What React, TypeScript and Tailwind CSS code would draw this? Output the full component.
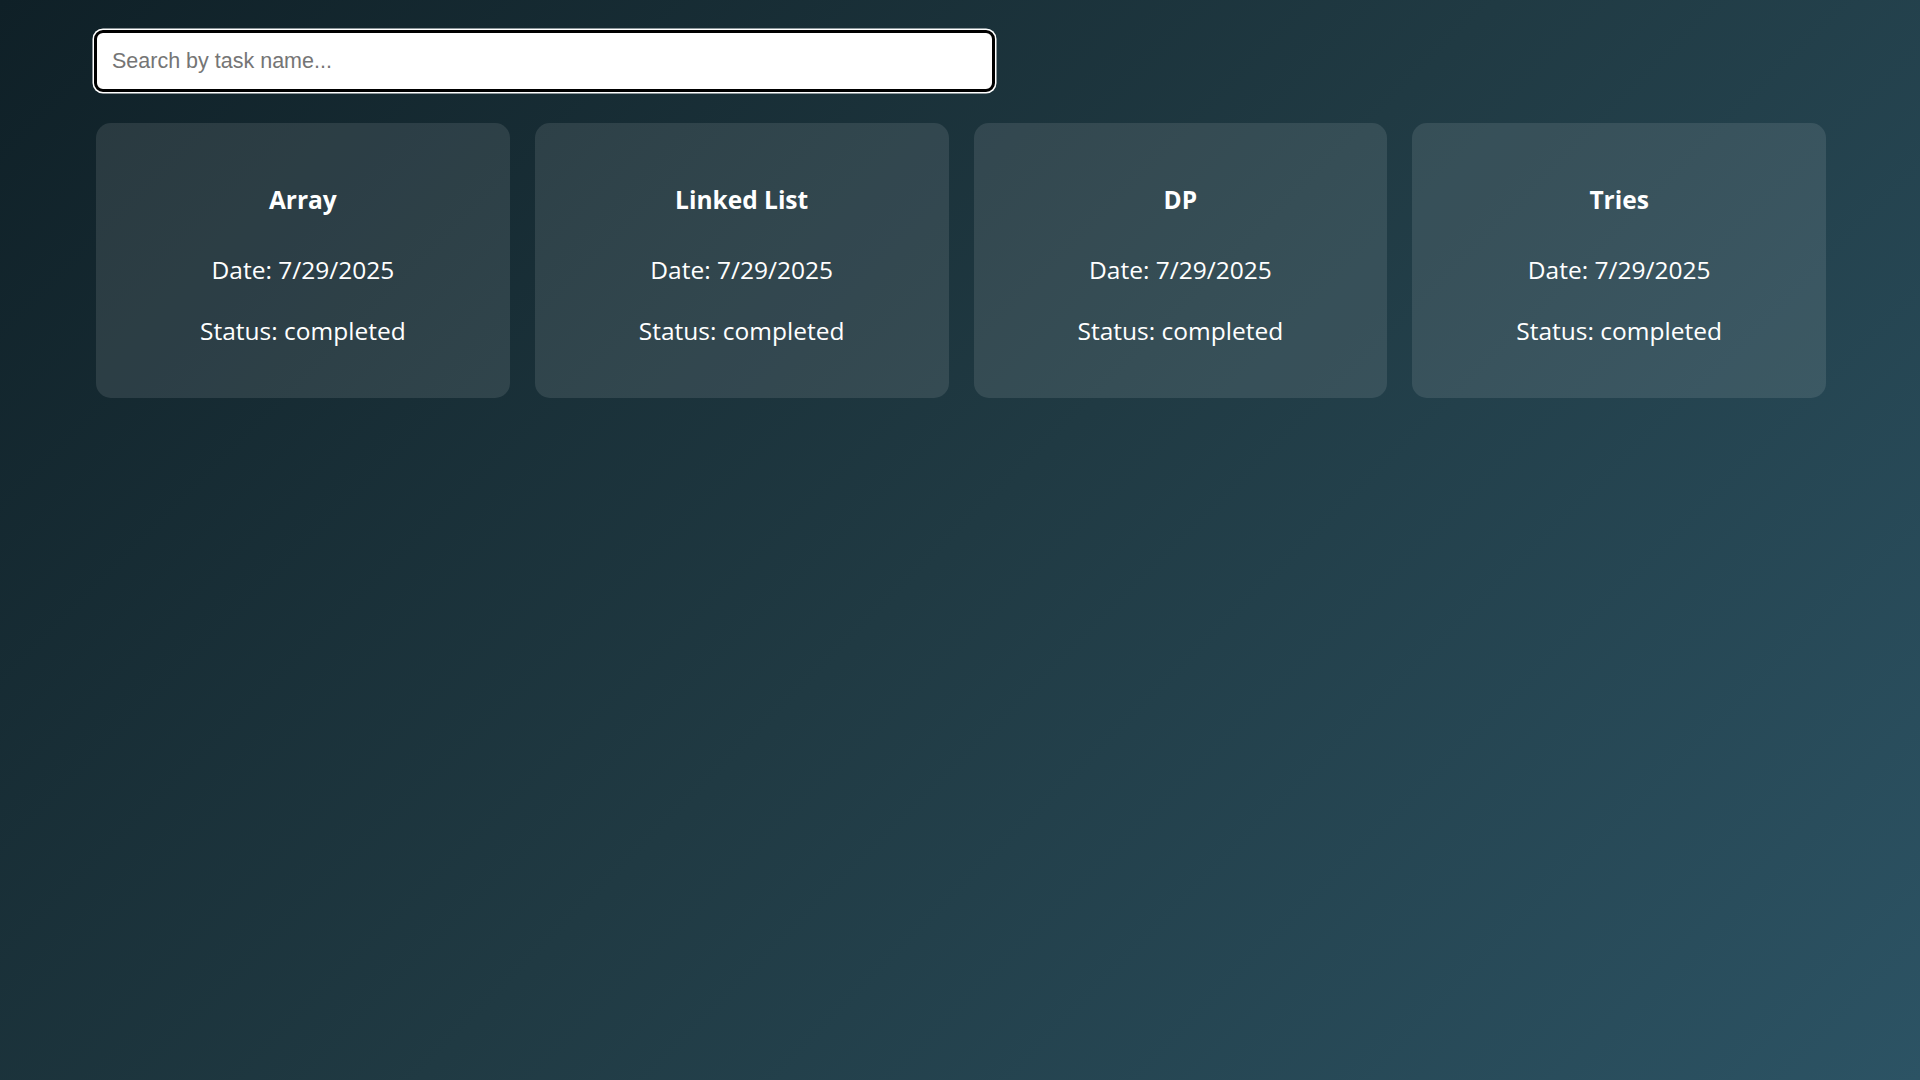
import React, { useState } from 'react';

type Task = {
  id: number;
  name: string;
  date: string;
  status: string;
};

const tasks: Task[] = [
  { id: 1, name: 'Array', date: '7/29/2025', status: 'completed' },
  { id: 2, name: 'Linked List', date: '7/29/2025', status: 'completed' },
  { id: 3, name: 'DP', date: '7/29/2025', status: 'completed' },
  { id: 4, name: 'Tries', date: '7/29/2025', status: 'completed' },
];

const TaskCard = ({ task }: { task: Task }) => (
  <div className="bg-white/10 rounded-[15px] pt-[62px] pb-[52px] text-center text-white font-['Open_Sans',sans-serif]">
    <h3 className="text-[24.5px] leading-[30px] font-bold">{task.name}</h3>
    <p className="text-[24.5px] leading-[30px] mt-[40px]">Date: {task.date}</p>
    <p className="text-[24.5px] leading-[30px] mt-[31px]">Status: {task.status}</p>
  </div>
);

const App: React.FC = () => {
  const [query, setQuery] = useState('');

  const filtered = tasks.filter((t) => t.name.toLowerCase().includes(query.toLowerCase()));

  return (
    <div className="min-h-screen bg-[linear-gradient(135deg,#0f2027,#203a43,#2c5364)] pt-[30px] pl-[96px] pr-[94px]">
      <div className="-ml-[2px]">
        <input
          type="text"
          value={query}
          onChange={(e) => setQuery(e.target.value)}
          placeholder="Search by task name..."
          className="w-[901px] h-[62px] bg-white border-[3px] border-black rounded-[9px] shadow-[0_0_0_1.5px_#ffffff] pl-[15px] outline-none text-[21.5px] text-black placeholder:text-[#757575] font-['Liberation_Sans',Arial,sans-serif]"
        />
      </div>

      <div className="grid grid-cols-4 gap-[25px] mt-[31px]">
        {filtered.map((task) => (
          <TaskCard key={task.id} task={task} />
        ))}
      </div>
    </div>
  );
};

export default App;
